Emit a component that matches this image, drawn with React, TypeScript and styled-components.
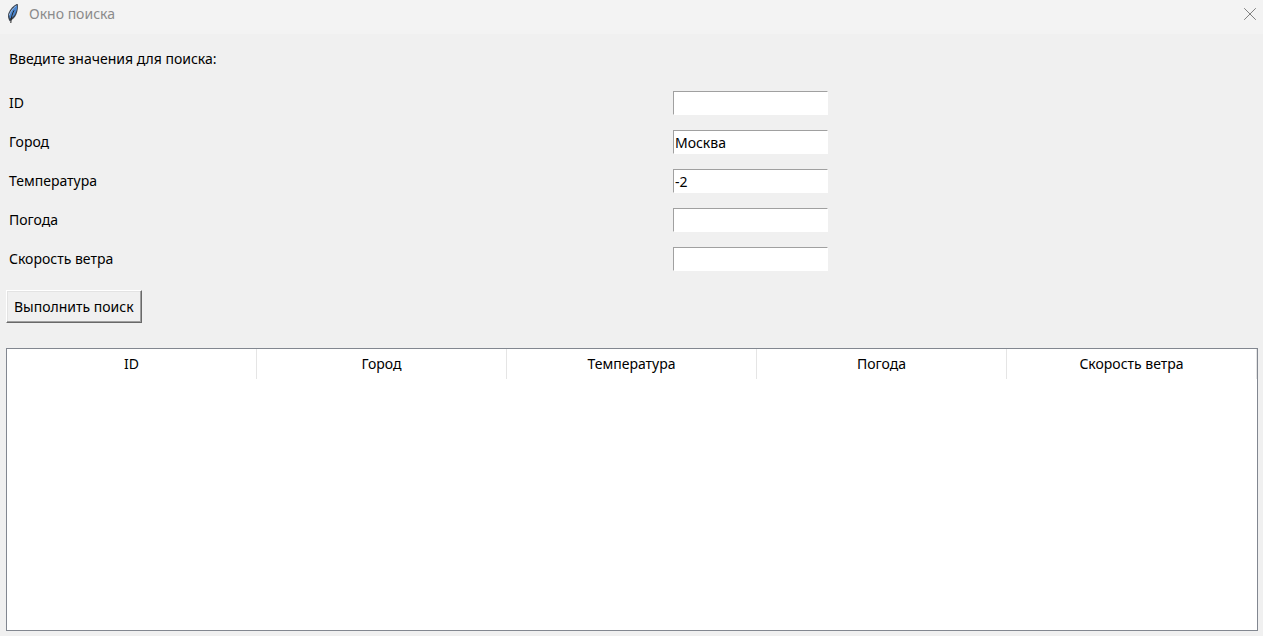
import React, { useState } from "react";
import styled, { createGlobalStyle } from "styled-components";

const GlobalStyle = createGlobalStyle`
  *, *::before, *::after { box-sizing: border-box; }
  body {
    margin: 0;
    background: #f0f0f0;
    color: #000;
    font-family: "Noto Sans", "Open Sans", sans-serif;
    font-size: 14px;
    line-height: 20px;
  }
`;

const Window = styled.div`
  display: flex;
  flex-direction: column;
  min-height: 100vh;
`;

const TitleBar = styled.header`
  display: flex;
  align-items: center;
  height: 34px;
  padding: 0 6px 6px;
  background: #f3f3f3;
`;

const Title = styled.h1`
  flex: 1;
  margin: 0 0 0 9px;
  color: #8b8b8b;
  font-size: 14px;
  font-weight: 400;
  line-height: 20px;
`;

const CloseButton = styled.button`
  display: flex;
  padding: 0;
  border: 0;
  background: none;
  color: #808080;
`;

const Content = styled.main`
  display: flex;
  flex: 1;
  flex-direction: column;
  padding: 15px 5px 5px 6px;
`;

const Prompt = styled.p`
  margin: 0 0 22px;
  padding-left: 3px;
`;

const SearchForm = styled.form`
  display: flex;
  flex-direction: column;
  gap: 15px;
  margin-bottom: 25px;
`;

const Field = styled.div`
  display: grid;
  grid-template-columns: 57fr 50fr;
  align-items: center;
`;

const Label = styled.label`
  padding-left: 3px;
`;

const Entry = styled.input`
  width: 155px;
  height: 24px;
  padding: 0 1px;
  border: 1px solid;
  border-color: #a0a0a0 #fff #fff #a0a0a0;
  border-radius: 0;
  outline: 0;
  background: #fff;
  color: #000;
  font: inherit;
`;

const SubmitButton = styled.button`
  align-self: flex-start;
  height: 33px;
  margin-top: 4px;
  padding: 0 7px;
  border: 1px solid;
  border-color: #fff #696969 #696969 #fff;
  border-radius: 0;
  background: #f0f0f0;
  box-shadow: inset -1px -1px #a0a0a0, inset 1px 1px #e3e3e3;
  color: #000;
  font: inherit;
`;

const Results = styled.section`
  flex: 1;
  border: 1px solid #828790;
  background: #fff;
`;

const ResultsTable = styled.table`
  width: 100%;
  table-layout: fixed;
  border-collapse: separate;
  border-spacing: 0;
`;

const HeaderCell = styled.th`
  height: 30px;
  padding: 0;
  border-right: 1px solid #e5e5e5;
  font-weight: 400;
  text-align: center;
`;

const fields = [
  { id: "id", label: "ID", value: "" },
  { id: "city", label: "Город", value: "Москва" },
  { id: "temperature", label: "Температура", value: "-2" },
  { id: "weather", label: "Погода", value: "" },
  { id: "wind", label: "Скорость ветра", value: "" },
];

const FeatherIcon = () => (
  <svg width="14" height="20" viewBox="0 0 14 20" aria-hidden="true">
    <path d="M11.6 -.4C8.2 1 4.2 4.6 2.4 9.2C1.6 11.7 2 14.7 3.8 17.2C6.3 15.6 9 13.9 10.3 10.4C11.6 7.2 12.5 3.1 11.6 -.4Z" fill="#3a4350" />
    <path d="M11 1.2C7.6 3 4 7.6 3.2 11.6L3.8 14.6C7 13.4 9 11 9.6 8.8C10.8 6.3 11.6 3.6 11 1.2Z" fill="#4a86d0" />
    <path d="M10.2 1.8C7 4 4.2 7.8 3.2 11.4" fill="none" stroke="#9dbbe0" strokeWidth="1" />
    <path d="M8 6.4C6.4 9.4 5 13.4 4.8 19" fill="none" stroke="#252525" strokeWidth="1" />
  </svg>
);

export default function App() {
  const [values, setValues] = useState<Record<string, string>>(
    Object.fromEntries(fields.map((field) => [field.id, field.value]))
  );

  return (
    <Window>
      <GlobalStyle />
      <TitleBar>
        <FeatherIcon />
        <Title>Окно поиска</Title>
        <CloseButton type="button" aria-label="Закрыть">
          <svg width="14" height="14" viewBox="0 0 14 14" aria-hidden="true">
            <path d="M1.2 1.2L12.8 12.8M12.8 1.2L1.2 12.8" stroke="currentColor" fill="none" />
          </svg>
        </CloseButton>
      </TitleBar>
      <Content>
        <Prompt>Введите значения для поиска:</Prompt>
        <SearchForm onSubmit={(event) => event.preventDefault()}>
          {fields.map((field) => (
            <Field key={field.id}>
              <Label htmlFor={field.id}>{field.label}</Label>
              <Entry
                id={field.id}
                type="text"
                autoComplete="off"
                value={values[field.id]}
                onChange={(event) => setValues({ ...values, [field.id]: event.target.value })}
              />
            </Field>
          ))}
          <SubmitButton type="submit">Выполнить поиск</SubmitButton>
        </SearchForm>
        <Results>
          <ResultsTable>
            <thead>
              <tr>
                {fields.map((field) => (
                  <HeaderCell key={field.id} scope="col">{field.label}</HeaderCell>
                ))}
              </tr>
            </thead>
            <tbody />
          </ResultsTable>
        </Results>
      </Content>
    </Window>
  );
}
